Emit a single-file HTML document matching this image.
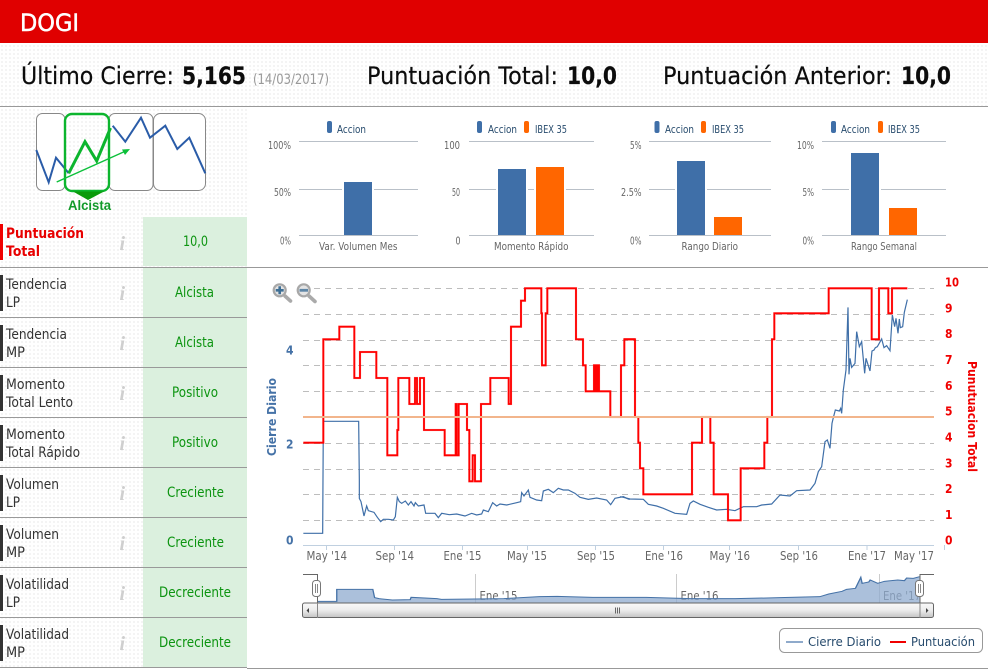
<!DOCTYPE html>
<html lang="es"><head><meta charset="utf-8"><title>DOGI</title>
<style>
html,body{margin:0;padding:0;width:988px;height:669px;overflow:hidden;background:#fff}
#bg{position:absolute;left:0;top:0;width:988px;height:669px;background-color:#fff;background-image:radial-gradient(#f1f1f1 .9px,transparent 1px);background-size:4px 4px}
svg{position:absolute;left:0;top:0;display:block}
text{font-family:"DejaVu Sans","Liberation Sans",sans-serif}
</style></head><body><div id="bg"></div>
<svg width="988" height="669" viewBox="0 0 988 669" xmlns="http://www.w3.org/2000/svg">
<defs>
<linearGradient id="sb" x1="0" y1="0" x2="0" y2="1"><stop offset="0" stop-color="#fafafa"/><stop offset=".5" stop-color="#ececec"/><stop offset="1" stop-color="#c4c4c4"/></linearGradient>
<clipPath id="nav"><rect x="303" y="574" width="617" height="30"/></clipPath>
</defs>
<!-- white chart panels -->
<rect x="247" y="107" width="741" height="562" fill="#fff"/>
<!-- header -->
<rect x="0" y="0" width="988" height="43" fill="#e00000"/>
<text x="20" y="31" font-size="24" fill="#fff" stroke="#fff" stroke-width=".5" textLength="59" lengthAdjust="spacingAndGlyphs">DOGI</text>
<g fill="#0c0c0c" font-size="24" stroke="#0c0c0c" stroke-width=".2">
<text x="21" y="84" textLength="153" lengthAdjust="spacingAndGlyphs">Último Cierre:</text>
<text x="182" y="84" font-weight="bold" textLength="64" lengthAdjust="spacingAndGlyphs">5,165</text>
<text x="367" y="84" textLength="191" lengthAdjust="spacingAndGlyphs">Puntuación Total:</text>
<text x="567" y="84" font-weight="bold" textLength="50" lengthAdjust="spacingAndGlyphs">10,0</text>
<text x="663" y="84" textLength="229" lengthAdjust="spacingAndGlyphs">Puntuación Anterior:</text>
<text x="901" y="84" font-weight="bold" textLength="50" lengthAdjust="spacingAndGlyphs">10,0</text>
</g>
<text x="253" y="84" font-size="14" fill="#999" textLength="76" lengthAdjust="spacingAndGlyphs">(14/03/2017)</text>
<rect x="0" y="106" width="988" height="1" fill="#999"/>

<!-- trend thumbnail -->
<g fill="#fff" stroke="#888" stroke-width="1">
<rect x="36.5" y="113.5" width="28.5" height="77" rx="6"/>
<rect x="109" y="113.5" width="44" height="77" rx="6"/>
<rect x="153.5" y="113.5" width="52" height="77" rx="7"/>
</g>
<polyline fill="none" stroke="#2a5ca8" stroke-width="2" points="36.3,150 48.7,182.3 56,157.7 68.7,173.3"/>
<polyline fill="none" stroke="#2a5ca8" stroke-width="2" points="112.7,125.7 125.3,141.7 141,117.7 150,137.7 165.3,125.7 177.300,149 189.300,137.700 205.300,173.300"/>
<rect x="65" y="114" width="44" height="77" rx="7" fill="none" stroke="#0cb52e" stroke-width="2.4"/>
<polyline fill="none" stroke="#0cb52e" stroke-width="3" points="68.7,173.3 85,141.7 96.7,161 110.5,128"/>
<path d="M56.7,182 L128,150" stroke="#0cc03a" stroke-width="1.4" fill="none"/>
<path d="M130,149 L122,149.5 L125,155Z" fill="#0cc03a"/>
<path d="M73,191.5 L104,191.5 L88,200Z" fill="#0a9a0a"/>
<text x="68" y="210" style="font-family:'Liberation Sans',sans-serif" font-size="14" font-weight="bold" fill="#129a2a" textLength="43" lengthAdjust="spacingAndGlyphs">Alcista</text>

<!-- score table -->
<g fill="#dbf0de">
<rect x="143" y="217" width="104" height="49"/><rect x="143" y="268" width="104" height="49"/><rect x="143" y="318" width="104" height="49"/><rect x="143" y="368" width="104" height="49"/><rect x="143" y="418" width="104" height="49"/><rect x="143" y="468" width="104" height="49"/><rect x="143" y="518" width="104" height="49"/><rect x="143" y="568" width="104" height="49"/><rect x="143" y="618" width="104" height="49"/>
</g>
<g fill="#999">
<rect x="0" y="267" width="988" height="1"/><rect x="0" y="317" width="247" height="1"/><rect x="0" y="367" width="247" height="1"/><rect x="0" y="417" width="247" height="1"/><rect x="0" y="467" width="247" height="1"/><rect x="0" y="517" width="247" height="1"/><rect x="0" y="567" width="247" height="1"/><rect x="0" y="617" width="247" height="1"/><rect x="0" y="667" width="247" height="1"/><rect x="247" y="668" width="741" height="1"/>
</g>
<rect x="0" y="224" width="3" height="36" fill="#f00000"/>
<g fill="#333">
<rect x="0" y="275" width="3" height="36"/><rect x="0" y="325" width="3" height="36"/><rect x="0" y="375" width="3" height="36"/><rect x="0" y="425" width="3" height="36"/><rect x="0" y="475" width="3" height="36"/><rect x="0" y="525" width="3" height="36"/><rect x="0" y="575" width="3" height="36"/><rect x="0" y="625" width="3" height="36"/>
</g>
<g font-size="14" fill="#e80000" font-weight="bold">
<text x="6" y="238" textLength="78" lengthAdjust="spacingAndGlyphs">Puntuación</text>
<text x="6" y="256" textLength="34" lengthAdjust="spacingAndGlyphs">Total</text>
</g>
<g font-size="14" fill="#333">
<text x="6" y="289" textLength="61" lengthAdjust="spacingAndGlyphs">Tendencia</text><text x="6" y="307" textLength="14" lengthAdjust="spacingAndGlyphs">LP</text>
<text x="6" y="339" textLength="61" lengthAdjust="spacingAndGlyphs">Tendencia</text><text x="6" y="357" textLength="19" lengthAdjust="spacingAndGlyphs">MP</text>
<text x="6" y="389" textLength="59" lengthAdjust="spacingAndGlyphs">Momento</text><text x="6" y="407" textLength="67" lengthAdjust="spacingAndGlyphs">Total Lento</text>
<text x="6" y="439" textLength="59" lengthAdjust="spacingAndGlyphs">Momento</text><text x="6" y="457" textLength="74" lengthAdjust="spacingAndGlyphs">Total Rápido</text>
<text x="6" y="489" textLength="53" lengthAdjust="spacingAndGlyphs">Volumen</text><text x="6" y="507" textLength="14" lengthAdjust="spacingAndGlyphs">LP</text>
<text x="6" y="539" textLength="53" lengthAdjust="spacingAndGlyphs">Volumen</text><text x="6" y="557" textLength="19" lengthAdjust="spacingAndGlyphs">MP</text>
<text x="6" y="589" textLength="63" lengthAdjust="spacingAndGlyphs">Volatilidad</text><text x="6" y="607" textLength="14" lengthAdjust="spacingAndGlyphs">LP</text>
<text x="6" y="639" textLength="63" lengthAdjust="spacingAndGlyphs">Volatilidad</text><text x="6" y="657" textLength="19" lengthAdjust="spacingAndGlyphs">MP</text>
</g>
<g font-size="14" fill="#0c9410">
<text x="183" y="246" textLength="25" lengthAdjust="spacingAndGlyphs">10,0</text>
<text x="175" y="297" textLength="39" lengthAdjust="spacingAndGlyphs">Alcista</text>
<text x="175" y="347" textLength="39" lengthAdjust="spacingAndGlyphs">Alcista</text>
<text x="172" y="397" textLength="46" lengthAdjust="spacingAndGlyphs">Positivo</text>
<text x="172" y="447" textLength="46" lengthAdjust="spacingAndGlyphs">Positivo</text>
<text x="167" y="497" textLength="57" lengthAdjust="spacingAndGlyphs">Creciente</text>
<text x="167" y="547" textLength="57" lengthAdjust="spacingAndGlyphs">Creciente</text>
<text x="159" y="597" textLength="72" lengthAdjust="spacingAndGlyphs">Decreciente</text>
<text x="159" y="647" textLength="72" lengthAdjust="spacingAndGlyphs">Decreciente</text>
</g>
<g font-size="20" fill="#cfcfcf" font-style="italic" font-weight="bold">
<text x="119.500" y="250" style="font-family:'Liberation Serif',serif">i</text><text x="119.500" y="300" style="font-family:'Liberation Serif',serif">i</text><text x="119.500" y="350" style="font-family:'Liberation Serif',serif">i</text><text x="119.500" y="400" style="font-family:'Liberation Serif',serif">i</text><text x="119.500" y="450" style="font-family:'Liberation Serif',serif">i</text><text x="119.500" y="500" style="font-family:'Liberation Serif',serif">i</text><text x="119.500" y="550" style="font-family:'Liberation Serif',serif">i</text><text x="119.500" y="600" style="font-family:'Liberation Serif',serif">i</text><text x="119.500" y="650" style="font-family:'Liberation Serif',serif">i</text>
</g>

<!-- small bar charts -->
<g fill="#b9c0c8">
<rect x="299" y="141" width="119" height="1"/><rect x="299" y="189" width="119" height="1"/><rect x="299" y="235" width="119" height="1"/>
<rect x="469" y="141" width="125" height="1"/><rect x="469" y="189" width="125" height="1"/><rect x="469" y="235" width="125" height="1"/>
<rect x="649" y="141" width="122" height="1"/><rect x="649" y="189" width="122" height="1"/><rect x="649" y="235" width="122" height="1"/>
<rect x="822" y="141" width="124" height="1"/><rect x="822" y="189" width="124" height="1"/><rect x="822" y="235" width="124" height="1"/>
</g>
<g fill="#fff"><rect x="342" y="185" width="32" height="6"/><rect x="496" y="185" width="32" height="6"/><rect x="534" y="185" width="32" height="6"/><rect x="675" y="185" width="32" height="6"/><rect x="849" y="185" width="32" height="6"/></g>
<g fill="#3f6fa8">
<rect x="344" y="182" width="28" height="53"/>
<rect x="498" y="169" width="28" height="66"/>
<rect x="677" y="161" width="28" height="74"/>
<rect x="851" y="153" width="28" height="82"/>
</g>
<g fill="#ff6600">
<rect x="536" y="167" width="28" height="68"/>
<rect x="714" y="217" width="28" height="18"/>
<rect x="889" y="208" width="28" height="27"/>
</g>
<g fill="#3f6fa8">
<rect x="327" y="121" width="5" height="12" rx="2"/><rect x="477" y="121" width="5" height="12" rx="2"/><rect x="654.500" y="121" width="5" height="12" rx="2"/><rect x="831" y="121" width="5" height="12" rx="2"/>
</g>
<g fill="#ff6600">
<rect x="524" y="121" width="5" height="12" rx="2"/><rect x="701" y="121" width="5" height="12" rx="2"/><rect x="878" y="121" width="5" height="12" rx="2"/>
</g>
<g font-size="11" fill="#274b6d">
<text x="337" y="133" textLength="29" lengthAdjust="spacingAndGlyphs">Accion</text>
<text x="488" y="133" textLength="29" lengthAdjust="spacingAndGlyphs">Accion</text><text x="535" y="133" textLength="32" lengthAdjust="spacingAndGlyphs">IBEX 35</text>
<text x="665" y="133" textLength="29" lengthAdjust="spacingAndGlyphs">Accion</text><text x="712" y="133" textLength="32" lengthAdjust="spacingAndGlyphs">IBEX 35</text>
<text x="841" y="133" textLength="29" lengthAdjust="spacingAndGlyphs">Accion</text><text x="888" y="133" textLength="32" lengthAdjust="spacingAndGlyphs">IBEX 35</text>
</g>
<g font-size="11" fill="#666">
<text x="268" y="149" textLength="23" lengthAdjust="spacingAndGlyphs">100%</text><text x="274" y="196" textLength="17" lengthAdjust="spacingAndGlyphs">50%</text><text x="280" y="244.500" textLength="11" lengthAdjust="spacingAndGlyphs">0%</text>
<text x="444" y="149" textLength="16" lengthAdjust="spacingAndGlyphs">100</text><text x="452" y="196" textLength="8" lengthAdjust="spacingAndGlyphs">50</text><text x="455.500" y="244.500" textLength="5" lengthAdjust="spacingAndGlyphs">0</text>
<text x="630" y="149" textLength="11.500" lengthAdjust="spacingAndGlyphs">5%</text><text x="621" y="196" textLength="20.500" lengthAdjust="spacingAndGlyphs">2.5%</text><text x="630" y="244.500" textLength="11.500" lengthAdjust="spacingAndGlyphs">0%</text>
<text x="797" y="149" textLength="17" lengthAdjust="spacingAndGlyphs">10%</text><text x="802.500" y="196" textLength="11.500" lengthAdjust="spacingAndGlyphs">5%</text><text x="802.500" y="244.500" textLength="11.500" lengthAdjust="spacingAndGlyphs">0%</text>
<text x="319" y="250" textLength="78.500" lengthAdjust="spacingAndGlyphs">Var. Volumen Mes</text>
<text x="494" y="250" textLength="74.500" lengthAdjust="spacingAndGlyphs">Momento Rápido</text>
<text x="681.500" y="250" textLength="56.500" lengthAdjust="spacingAndGlyphs">Rango Diario</text>
<text x="851" y="250" textLength="66" lengthAdjust="spacingAndGlyphs">Rango Semanal</text>
</g>

<!-- main chart grid -->
<g stroke="#bdbdbd" stroke-width="1" stroke-dasharray="6 5" fill="none">
<path d="M303 288.500H934"/><path d="M303 314.500H934"/><path d="M303 340.500H934"/><path d="M303 365.500H934"/><path d="M303 391.500H934"/><path d="M303 443.500H934"/><path d="M303 469.500H934"/><path d="M303 494.500H934"/><path d="M303 520.500H934"/>
</g>
<path d="M303 545.500H934" stroke="#c0d0e0"/>
<path d="M326.500 545V550M394.500 545V550M462.500 545V550M527.500 545V550M595.500 545V550M663.500 545V550M729.500 545V550M798.500 545V550M867 545V550M944.500 545V550" stroke="#c0d0e0"/>

<!-- series -->
<g transform="translate(260 270) scale(.33333)" fill="none" stroke-linejoin="miter">
<polyline stroke="#3f6fa8" stroke-width="3.600" points="130,790 188,790 190,454 296,454 298,630 298,685 303,695 312,738 320,708 325,722 342,727 352,742 362,755 370,748 385,748 400,750 406,740 412,682 418,695 425,700 436,693 445,705 453,695 462,708 466,698 475,708 492,705 497,730 525,730 535,743 545,730 568,734 590,732 615,738 635,730 650,735 665,732 670,720 685,725 698,698 710,708 720,702 740,705 770,698 782,695 785,668 792,678 805,660 810,682 830,690 845,692 850,663 865,658 880,668 895,655 910,660 925,660 945,670 960,682 985,688 1010,684 1040,690 1052,704 1065,685 1090,680 1105,687 1110,688"/>
<polyline stroke="#ff0000" stroke-width="7" stroke-opacity=".25" points="130,518 190,518 190,208 238,208 238,170 283,170 283,324 300,324 300,246 349,246 349,324 382,324 382,556 412,556 412,480 415,480 415,324 448,324 448,402 465,402 465,324 471,324 471,402 480,402 480,324 492,324 492,480 554,480 554,556 587,556 587,402 590,402 590,556 596,556 596,402 621,402 621,480 628,480 628,634 638,634 638,556 645,556 645,634 663,634 663,402 691,402 691,324 746,324 746,402 753,402 753,170 783,170 783,92 795,92 795,55 844,55 844,130 846,130 846,286 857,286 857,130 862,130 862,55 948,55 948,208 969,208 969,286 977,286 977,364 1002,364 1002,286 1005,286 1005,364 1008,364 1008,286 1011,286 1011,364 1014,364 1014,286 1017,286 1017,364 1051,364 1051,441 1083,441 1083,286 1093,286 1093,208 1125,208"/>
<polyline stroke="#ff0000" stroke-width="5.500" points="130,518 190,518 190,208 238,208 238,170 283,170 283,324 300,324 300,246 349,246 349,324 382,324 382,556 412,556 412,480 415,480 415,324 448,324 448,402 465,402 465,324 471,324 471,402 480,402 480,324 492,324 492,480 554,480 554,556 587,556 587,402 590,402 590,556 596,556 596,402 621,402 621,480 628,480 628,634 638,634 638,556 645,556 645,634 663,634 663,402 691,402 691,324 746,324 746,402 753,402 753,170 783,170 783,92 795,92 795,55 844,55 844,130 846,130 846,286 857,286 857,130 862,130 862,55 948,55 948,208 969,208 969,286 977,286 977,364 1002,364 1002,286 1005,286 1005,364 1008,364 1008,286 1011,286 1011,364 1014,364 1014,286 1017,286 1017,364 1051,364 1051,441 1083,441 1083,286 1093,286 1093,208 1125,208"/>
</g>
<g transform="translate(620 270) scale(.33333)" fill="none">
<polyline stroke="#3f6fa8" stroke-width="3.600" points="0,680 10,682 30,687 70,688 85,703 110,708 130,715 165,730 200,733 210,700 220,693 240,703 265,712 290,720 320,718 345,722 370,710 410,710 425,705 455,702 480,675 510,678 530,662 570,660 585,640 595,605 605,590 615,515 622,510 630,535 636,460 640,443 646,420 658,423 662,415 665,430 670,360 678,300 684,112 687,313 690,265 695,292 705,280 710,185 718,230 725,215 734,310 738,265 750,303 756,243 762,240 766,233 772,230 785,207 792,233 800,227 810,242 817,135 824,170 828,145 834,190 838,147 841,173 848,170 853,127 862,89"/>
<polyline stroke="#ff0000" stroke-width="7" stroke-opacity=".25" points="12,208 45,208 45,441 55,441 55,518 60,518 60,595 70,595 70,673 216,673 216,518 246,518 246,441 271,441 271,518 281,518 281,673 324,673 324,751 362,751 362,595 433,595 433,518 442,518 442,441 456,441 456,208 463,208 463,130 626,130 626,55 755,55 755,208 777,208 777,55 805,55 805,130 816,130 816,55 862,55"/>
<polyline stroke="#ff0000" stroke-width="5.500" points="12,208 45,208 45,441 55,441 55,518 60,518 60,595 70,595 70,673 216,673 216,518 246,518 246,441 271,441 271,518 281,518 281,673 324,673 324,751 362,751 362,595 433,595 433,518 442,518 442,441 456,441 456,208 463,208 463,130 626,130 626,55 755,55 755,208 777,208 777,55 805,55 805,130 816,130 816,55 862,55"/>
</g>
<rect x="303" y="416" width="631" height="2" fill="#f2b58c"/>

<!-- zoom icons -->
<g fill="none">
<path d="M285 296L290.500 301" stroke="#aaa" stroke-width="3.600" stroke-linecap="round"/>
<circle cx="279.700" cy="290.300" r="6" fill="#e4e4e4" stroke="#a8a8a8" stroke-width="2.200"/>
<path d="M275.700 290.300H283.700M279.700 286.300V294.300" stroke="#3f6f95" stroke-width="2.600"/>
<path d="M309 296L315 301.500" stroke="#aaa" stroke-width="3.600" stroke-linecap="round"/>
<circle cx="303.700" cy="290.300" r="6" fill="#e4e4e4" stroke="#a8a8a8" stroke-width="2.200"/>
<path d="M299.500 290.300H308" stroke="#5f86a6" stroke-width="2.800"/>
</g>

<!-- main chart axis labels -->
<g font-size="12" font-weight="bold" fill="#4572a7">
<text x="286" y="354.500" textLength="7.500" lengthAdjust="spacingAndGlyphs">4</text>
<text x="286" y="448.500" textLength="7.500" lengthAdjust="spacingAndGlyphs">2</text>
<text x="286" y="544.500" textLength="7.500" lengthAdjust="spacingAndGlyphs">0</text>
<text transform="translate(276 456) rotate(-90)" textLength="78" lengthAdjust="spacingAndGlyphs">Cierre Diario</text>
</g>
<g font-size="12" font-weight="bold" fill="#f00000">
<text x="945" y="286.500" textLength="14" lengthAdjust="spacingAndGlyphs">10</text>
<text x="945" y="312.500" textLength="7.500" lengthAdjust="spacingAndGlyphs">9</text>
<text x="945" y="338" textLength="7.500" lengthAdjust="spacingAndGlyphs">8</text>
<text x="945" y="364" textLength="7.500" lengthAdjust="spacingAndGlyphs">7</text>
<text x="945" y="390" textLength="7.500" lengthAdjust="spacingAndGlyphs">6</text>
<text x="945" y="415.500" textLength="7.500" lengthAdjust="spacingAndGlyphs">5</text>
<text x="945" y="441.500" textLength="7.500" lengthAdjust="spacingAndGlyphs">4</text>
<text x="945" y="467.500" textLength="7.500" lengthAdjust="spacingAndGlyphs">3</text>
<text x="945" y="493" textLength="7.500" lengthAdjust="spacingAndGlyphs">2</text>
<text x="945" y="519" textLength="7.500" lengthAdjust="spacingAndGlyphs">1</text>
<text x="945" y="544.500" textLength="7.500" lengthAdjust="spacingAndGlyphs">0</text>
<text transform="translate(968 361) rotate(90)" textLength="111" lengthAdjust="spacingAndGlyphs">Punutuacion Total</text>
</g>
<g font-size="12" fill="#666">
<text x="306.500" y="560" textLength="40.500" lengthAdjust="spacingAndGlyphs">May '14</text>
<text x="375.500" y="560" textLength="38.500" lengthAdjust="spacingAndGlyphs">Sep '14</text>
<text x="443.500" y="560" textLength="38" lengthAdjust="spacingAndGlyphs">Ene '15</text>
<text x="507" y="560" textLength="40" lengthAdjust="spacingAndGlyphs">May '15</text>
<text x="577" y="560" textLength="38" lengthAdjust="spacingAndGlyphs">Sep '15</text>
<text x="645" y="560" textLength="38" lengthAdjust="spacingAndGlyphs">Ene '16</text>
<text x="709.500" y="560" textLength="40.500" lengthAdjust="spacingAndGlyphs">May '16</text>
<text x="780" y="560" textLength="38" lengthAdjust="spacingAndGlyphs">Sep '16</text>
<text x="848" y="560" textLength="38" lengthAdjust="spacingAndGlyphs">Ene '17</text>
<text x="894" y="560" textLength="40" lengthAdjust="spacingAndGlyphs">May '17</text>
</g>

<!-- navigator -->
<path d="M475.500 574V603M676.500 574V603M879.500 574V603" stroke="#ccc"/>
<g clip-path="url(#nav)" font-size="12" fill="#666">
<text x="479.500" y="600" textLength="38" lengthAdjust="spacingAndGlyphs">Ene '15</text>
<text x="680.500" y="600" textLength="38" lengthAdjust="spacingAndGlyphs">Ene '16</text>
<text x="883" y="600" textLength="38" lengthAdjust="spacingAndGlyphs">Ene '17</text>
</g>
<g transform="translate(290 550) scale(.44524 .33333)">
<polygon fill="#8fabcf" fill-opacity=".75" points="62,160 62,154 105,154 105,118 186,118 190,143 200,146 230,150 270,149 272,142 330,146 340,148 415,147 480,146 560,140 600,139 680,142 750,142 800,142 900,146 1000,146 1100,143 1190,140 1210,132 1240,124 1250,118 1270,115 1282,82 1285,100 1300,96 1303,90 1320,100 1335,94 1365,90 1380,92 1385,84 1400,85 1414,80 1414,160"/>
<polyline fill="none" stroke="#4572a7" stroke-width="3" points="62,154 105,154 105,118 186,118 190,143 200,146 230,150 270,149 272,142 330,146 340,148 415,147 480,146 560,140 600,139 680,142 750,142 800,142 900,146 1000,146 1100,143 1190,140 1210,132 1240,124 1250,118 1270,115 1282,82 1285,100 1300,96 1303,90 1320,100 1335,94 1365,90 1380,92 1385,84 1400,85 1414,80"/>
</g>
<path d="M303 574.500H317.500V603" fill="none" stroke="#666"/>
<path d="M920 603V574.500H934" fill="none" stroke="#666"/>
<rect x="312.500" y="580.500" width="8" height="16" rx="3" fill="#fff" stroke="#777"/>
<path d="M315.500 584V593M317.500 584V593" stroke="#888"/>
<rect x="915.500" y="580.500" width="8" height="16" rx="3" fill="#fff" stroke="#777"/>
<path d="M918.500 584V593M920.500 584V593" stroke="#888"/>
<!-- scrollbar -->
<rect x="302.500" y="603" width="631" height="14.500" rx="2" fill="url(#sb)" stroke="#666"/>
<path d="M317.500 603V618M920 603V618" stroke="#888"/>
<path d="M309 608L306.500 610.500L309 613Z" fill="#444"/>
<path d="M926 608L928.500 610.500L926 613Z" fill="#444"/>
<path d="M615.500 607.500V613.500M617.500 607.500V613.500M619.500 607.500V613.500" stroke="#666"/>

<!-- legend -->
<rect x="779.500" y="628.500" width="203" height="24" rx="5" fill="#fff" stroke="#999"/>
<rect x="786" y="641" width="17" height="2" fill="#8faacb"/>
<rect x="890" y="641" width="16" height="2" fill="#f00000"/>
<g font-size="12" fill="#274b6d">
<text x="808" y="646" textLength="73" lengthAdjust="spacingAndGlyphs">Cierre Diario</text>
<text x="911" y="646" textLength="64" lengthAdjust="spacingAndGlyphs">Puntuación</text>
</g>
</svg>
</body></html>
